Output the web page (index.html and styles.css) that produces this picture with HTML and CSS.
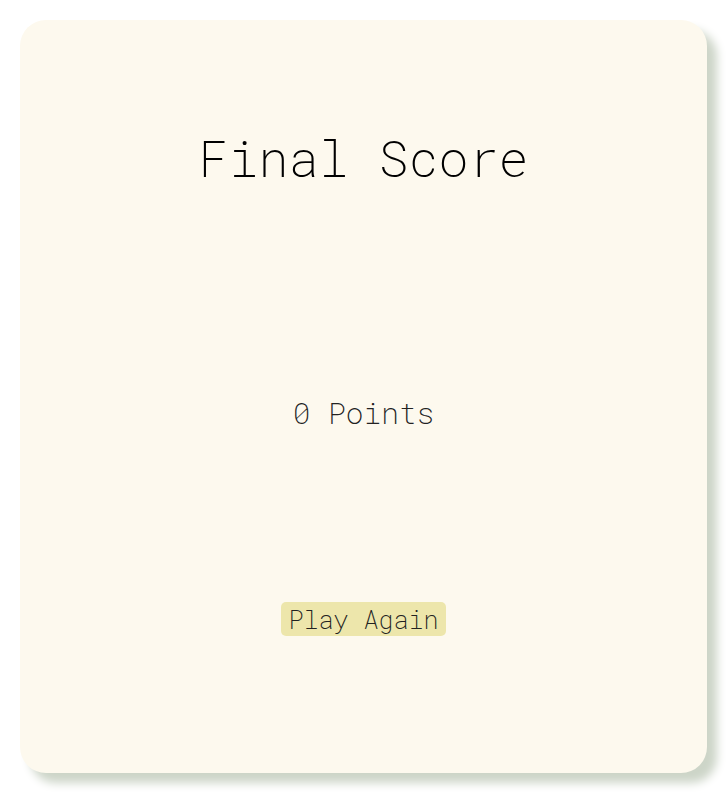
FILE: index.html
```html
<!DOCTYPE html>
<html>
<head>
<meta charset="utf-8">
<link rel="stylesheet" href="styles.css">
</head>
<body>
<main class="card">
  <h1 class="title">Final Score</h1>
  <p class="points">0 Points</p>
  <button class="again">Play Again</button>
</main>
</body>
</html>
```

FILE: styles.css
```css
html, body {
  margin: 0;
  padding: 0;
  background: #ffffff;
}
body {
  padding: 20px 21px 27px 20px;
  font-family: "Roboto Mono", "DejaVu Sans Mono", "Liberation Mono", monospace;
  font-weight: 300;
}
.card {
  box-sizing: border-box;
  height: 753px;
  background: #fdf9ee;
  border-radius: 26px;
  box-shadow: 10px 10px 10px #cdd5c8;
  display: flex;
  flex-direction: column;
  align-items: center;
  padding-top: 108px;
}
.title {
  margin: 0;
  font-size: 50px;
  font-weight: 200;
  line-height: 60px;
  color: #000;
}
.points {
  margin: 208px 0 0;
  font-size: 29.5px;
  font-weight: 200;
  line-height: 34px;
  color: #222;
}
.again {
  margin-top: 172px;
  height: 34px;
  padding: 0 7px;
  border: none;
  border-radius: 5px;
  background: #ede6ab;
  font-family: inherit;
  font-weight: 200;
  font-size: 25px;
  color: #222;
}
```
